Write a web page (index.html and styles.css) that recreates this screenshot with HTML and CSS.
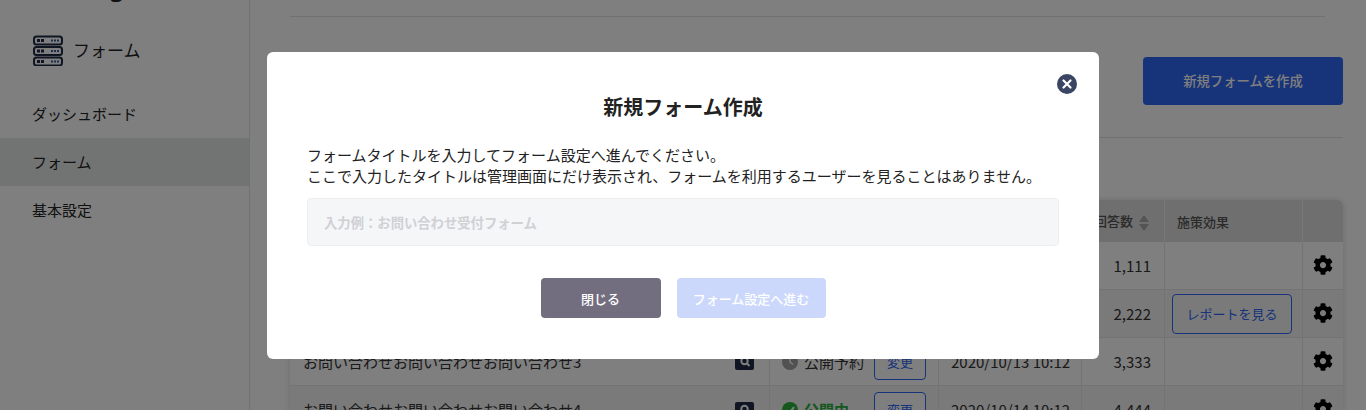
FILE: index.html
```html
<!DOCTYPE html>
<html lang="ja">
<head>
    <meta charset="UTF-8">
    <title>フォーム</title>
    <link rel="stylesheet" href="styles.css">
</head>
<body>

<div class="page">
    <aside class="sidebar">
        <div class="brand-tail">Forming</div>
        <div class="sidebar-title">
            <svg class="server-icon" width="32" height="32" viewBox="0 0 32 32">
                <g class="server-row">
                    <rect x="2" y="2.500" width="28" height="8" rx="2.500"/>
                    <rect x="2" y="13" width="28" height="8" rx="2.500"/>
                    <rect x="2" y="23.500" width="28" height="8" rx="2.500"/>
                </g>
                <g fill="#1f2a44">
                    <rect x="5" y="5" width="3" height="3"/><rect x="9" y="5" width="3" height="3"/>
                    <rect x="5" y="15.500" width="3" height="3"/><rect x="9" y="15.500" width="3" height="3"/>
                    <rect x="5" y="26" width="3" height="3"/><rect x="9" y="26" width="3" height="3"/>
                </g>
                <g fill="#3d56a8">
                    <rect x="19" y="5.500" width="2" height="2"/><rect x="22" y="5.500" width="2" height="2"/><rect x="25" y="5.500" width="2" height="2"/>
                    <rect x="19" y="16" width="2" height="2"/><rect x="22" y="16" width="2" height="2"/><rect x="25" y="16" width="2" height="2"/>
                    <rect x="19" y="26.500" width="2" height="2"/><rect x="22" y="26.500" width="2" height="2"/><rect x="25" y="26.500" width="2" height="2"/>
                </g>
            </svg>
            <span>フォーム</span>
        </div>
        <nav class="side-nav">
            <a class="side-link">ダッシュボード</a>
            <a class="side-link active">フォーム</a>
            <a class="side-link">基本設定</a>
        </nav>
    </aside>

    <main class="content">
        <div class="rule-top"></div>
        <div class="head-row">
            <h2 class="page-title">フォーム一覧</h2>
            <button class="btn-create">新規フォームを作成</button>
        </div>
        <div class="rule-mid"></div>

        <table class="form-table">
            <thead>
                <tr>
                    <th class="col-title">フォームタイトル</th>
                    <th class="col-status">ステータス</th>
                    <th class="col-date">公開日時</th>
                    <th class="col-count">回答数<span class="sort"><i class="up"></i><i class="down"></i></span></th>
                    <th class="col-effect">施策効果</th>
                    <th class="col-gear"></th>
                </tr>
            </thead>
            <tbody>
                <tr>
                    <td><div class="title-cell">お問い合わせお問い合わせお問い合わせ1<span class="search-badge"></span></div></td>
                    <td></td>
                    <td class="date">2020/10/11 10:12</td>
                    <td class="count">1,111</td>
                    <td></td>
                    <td class="gear"><svg width="20" height="20" viewBox="0 0 512 512"><use href="#cog"/></svg></td>
                </tr>
                <tr>
                    <td><div class="title-cell">お問い合わせお問い合わせお問い合わせ2<span class="search-badge"></span></div></td>
                    <td></td>
                    <td class="date">2020/10/12 10:12</td>
                    <td class="count">2,222</td>
                    <td><a class="btn-report">レポートを見る</a></td>
                    <td class="gear"><svg width="20" height="20" viewBox="0 0 512 512"><use href="#cog"/></svg></td>
                </tr>
                <tr>
                    <td>
                        <div class="title-cell">お問い合わせお問い合わせお問い合わせ3
                            <span class="search-badge">
                                <svg width="12" height="12" viewBox="0 0 12 12"><circle cx="5.500" cy="5" r="3.200" fill="none" stroke="#fff" stroke-width="2"/><path d="M8 7.500l2.500 2.500" stroke="#fff" stroke-width="2"/></svg>
                            </span>
                        </div>
                    </td>
                    <td>
                        <div class="status-cell">
                            <span class="status scheduled">
                                <svg width="16" height="16" viewBox="0 0 16 16"><circle cx="8" cy="8" r="8" fill="#a2a2a2"/><path d="M8 3.500V8l3 2.500" fill="none" stroke="#fff" stroke-width="1.500"/></svg>
                                公開予約
                            </span>
                            <a class="btn-change">変更</a>
                        </div>
                    </td>
                    <td class="date">2020/10/13 10:12</td>
                    <td class="count">3,333</td>
                    <td></td>
                    <td class="gear"><svg width="20" height="20" viewBox="0 0 512 512"><use href="#cog"/></svg></td>
                </tr>
                <tr>
                    <td>
                        <div class="title-cell">お問い合わせお問い合わせお問い合わせ4
                            <span class="search-badge">
                                <svg width="12" height="12" viewBox="0 0 12 12"><circle cx="5.500" cy="5" r="3.200" fill="none" stroke="#fff" stroke-width="2"/><path d="M8 7.500l2.500 2.500" stroke="#fff" stroke-width="2"/></svg>
                            </span>
                        </div>
                    </td>
                    <td>
                        <div class="status-cell">
                            <span class="status live">
                                <svg width="16" height="16" viewBox="0 0 16 16"><circle cx="8" cy="8" r="8" fill="#28b03c"/><path d="M4 8.200l3 3 5-6" fill="none" stroke="#fff" stroke-width="2"/></svg>
                                公開中
                            </span>
                            <a class="btn-change">変更</a>
                        </div>
                    </td>
                    <td class="date">2020/10/14 10:12</td>
                    <td class="count">4,444</td>
                    <td></td>
                    <td class="gear"><svg width="20" height="20" viewBox="0 0 512 512"><use href="#cog"/></svg></td>
                </tr>
            </tbody>
        </table>
    </main>
</div>

<svg class="defs" width="0" height="0">
    <symbol id="cog" viewBox="0 0 512 512">
        <path d="M487.400 315.700l-42.600-24.600c4.300-23.200 4.300-47 0-70.200l42.600-24.600c4.900-2.800 7.100-8.600 5.500-14-11.100-35.600-30-67.800-54.700-94.600-3.800-4.100-10-5.100-14.800-2.300L380.800 110c-17.900-15.400-38.500-27.300-60.800-35.100V25.800c0-5.600-3.900-10.500-9.400-11.700-36.700-8.200-74.300-7.800-109.200 0-5.500 1.200-9.400 6.100-9.400 11.700V75c-22.200 7.900-42.800 19.800-60.800 35.100L88.700 85.500c-4.900-2.800-11-1.900-14.800 2.300-24.700 26.700-43.600 58.900-54.700 94.600-1.700 5.400.6 11.200 5.500 14L67.300 221c-4.300 23.200-4.300 47 0 70.200l-42.600 24.600c-4.900 2.800-7.100 8.600-5.500 14 11.100 35.600 30 67.800 54.700 94.600 3.800 4.100 10 5.100 14.800 2.300l42.600-24.600c17.900 15.400 38.500 27.300 60.800 35.100v49.200c0 5.600 3.900 10.500 9.400 11.700 36.700 8.200 74.300 7.800 109.200 0 5.500-1.200 9.400-6.100 9.400-11.700v-49.200c22.200-7.900 42.800-19.800 60.800-35.100l42.600 24.600c4.900 2.800 11 1.900 14.800-2.300 24.700-26.700 43.600-58.900 54.700-94.600 1.500-5.500-.7-11.300-5.600-14.100zM256 336c-44.100 0-80-35.900-80-80s35.900-80 80-80 80 35.900 80 80-35.900 80-80 80z"/>
    </symbol>
</svg>

<div class="overlay"></div>

<div class="modal">
    <button class="modal-close" aria-label="閉じる">
        <svg width="20" height="20" viewBox="0 0 20 20"><circle cx="10" cy="10" r="10" fill="#3b4563"/><path d="M6.500 6.500l7 7M13.500 6.500l-7 7" stroke="#fff" stroke-width="2.200" stroke-linecap="round"/></svg>
    </button>
    <h3 class="modal-title">新規フォーム作成</h3>
    <p class="modal-text">フォームタイトルを入力してフォーム設定へ進んでください。<br>ここで入力したタイトルは管理画面にだけ表示され、フォームを利用するユーザーを見ることはありません。</p>
    <input class="modal-input" type="text" placeholder="入力例：お問い合わせ受付フォーム">
    <div class="modal-actions">
        <button class="btn-close">閉じる</button>
        <button class="btn-next">フォーム設定へ進む</button>
    </div>
</div>

</body>
</html>
```

FILE: styles.css
```css
* {
    box-sizing: border-box;
}
html, body {
    height: 410px;
    overflow: hidden;
}
body {
    margin: 0;
    background: #fff;
    color: #222;
    font-family: "Noto Sans CJK JP", "Noto Sans", sans-serif;
    font-size: 15px;
}
.page {
    display: flex;
    height: 410px;
    overflow: hidden;
}
.defs {
    position: absolute;
}

/* sidebar */
.sidebar {
    width: 250px;
    flex-shrink: 0;
    background: #fff;
    border-right: 1px solid #e2e2e2;
}
.brand-tail {
    height: 22px;
    margin-top: -24px;
    padding-left: 32px;
    font-size: 22px;
    font-weight: 700;
    line-height: 22px;
}
.sidebar-title {
    display: flex;
    align-items: center;
    gap: 9px;
    height: 34px;
    margin-top: 35px;
    padding-left: 32px;
    font-size: 17px;
}
.sidebar-title span {
    margin-bottom: 2px;
}
.server-row rect {
    fill: #fff;
    stroke: #1f2a44;
    stroke-width: 2;
}
.side-nav {
    margin-top: 23px;
}
.side-link {
    display: flex;
    align-items: center;
    height: 48px;
    padding: 0 0 2px 32px;
    font-size: 15px;
}
.side-link.active {
    background: #e5e9e6;
}

/* main */
.content {
    flex: 1;
    padding: 0 23px 0 40px;
}
.rule-top {
    height: 17px;
    margin-right: 18px;
    border-bottom: 1px solid #e2e2e2;
}
.head-row {
    display: flex;
    justify-content: space-between;
    align-items: center;
    height: 120px;
    padding-top: 8px;
}
.page-title {
    margin: 0;
    font-size: 20px;
}
.btn-create {
    width: 200px;
    height: 48px;
    padding-bottom: 3px;
    border: none;
    border-radius: 4px;
    background: #2e66f4;
    color: #fff;
    font-family: inherit;
    font-size: 13.33px;
    font-weight: 500;
}
.rule-mid {
    border-bottom: 1px solid #e2e2e2;
}

/* table */
.form-table {
    width: 1053px;
    margin-top: 62px;
    border-collapse: separate;
    border-spacing: 0;
    table-layout: fixed;
    border-radius: 6px;
    box-shadow: 0 0 6px rgba(0, 0, 0, 0.15);
}
.form-table th {
    height: 42px;
    padding: 0 13px 0 12px;
    background: #dedede;
    border-right: 1px solid #f0f0f0;
    color: #555;
    font-size: 13px;
    font-weight: 500;
    text-align: left;
}
.form-table th:first-child {
    border-top-left-radius: 6px;
}
.form-table th:last-child {
    border-top-right-radius: 6px;
    border-right: none;
}
.form-table td {
    height: 48px;
    padding: 0 13px;
    background: #fff;
    border-right: 1px solid #e6e6e6;
    border-bottom: 1px solid #e6e6e6;
    font-size: 15px;
}
.form-table td:last-child {
    border-right: none;
}
.form-table tbody tr:nth-child(even) td {
    background: #f5f5f5;
}
.col-title { width: 480px; }
.col-status { width: 169px; }
.col-date { width: 143px; }
.col-count { width: 83px; }
.col-effect { width: 138px; }
.col-gear { width: 40px; }
.sort {
    display: inline-flex;
    flex-direction: column;
    gap: 2px;
    margin-left: 6px;
    vertical-align: middle;
}
.sort i {
    width: 0;
    height: 0;
    border-left: 5px solid transparent;
    border-right: 5px solid transparent;
}
.sort .up { border-bottom: 7px solid #a8a8a8; }
.sort .down { border-top: 7px solid #a8a8a8; }
.title-cell {
    display: flex;
    justify-content: space-between;
    align-items: center;
    color: #333;
}
.search-badge {
    display: flex;
    align-items: center;
    justify-content: center;
    width: 19px;
    height: 16px;
    margin-right: 2px;
    border-radius: 2px;
    background: #1f2a44;
}
.status-cell {
    display: flex;
    justify-content: space-between;
    align-items: center;
}
.status {
    display: flex;
    align-items: center;
    gap: 6px;
    margin-left: -1px;
}
.status.scheduled { color: #333; }
.status.live { color: #28b03c; font-weight: 700; }
.btn-change {
    display: flex;
    align-items: center;
    justify-content: center;
    width: 52px;
    height: 36px;
    margin-right: -1px;
    border: 1px solid #2e66f4;
    border-radius: 4px;
    background: #fff;
    color: #2e66f4;
    font-size: 13px;
}
.form-table .date {
    padding-left: 12px;
    white-space: nowrap;
    color: #333;
}
.count {
    text-align: right;
    color: #333;
}
.btn-report {
    display: flex;
    align-items: center;
    justify-content: center;
    width: 120px;
    height: 40px;
    margin-left: -6px;
    border: 1px solid #2e66f4;
    border-radius: 4px;
    color: #2e66f4;
    font-size: 13px;
}
.form-table .gear {
    padding: 0 1px 2px 0;
    text-align: center;
    color: #000;
}
.gear svg {
    display: block;
    margin: 0 auto;
}

/* modal */
.overlay {
    position: fixed;
    inset: 0;
    background: rgba(0, 0, 0, 0.5);
}
.modal {
    position: fixed;
    left: 267px;
    top: 52px;
    width: 832px;
    height: 307px;
    padding: 0 40px;
    background: #fff;
    border-radius: 6px;
}
.modal-close {
    position: absolute;
    top: 22px;
    right: 22px;
    width: 20px;
    height: 20px;
    padding: 0;
    border: none;
    background: none;
}
.modal-close svg {
    display: block;
}
.modal-title {
    margin: 41px 0 0;
    font-size: 20px;
    font-weight: 700;
    line-height: 28px;
    text-align: center;
    color: #222;
}
.modal-text {
    margin: 23px 0 0;
    font-size: 15px;
    line-height: 21px;
    color: #222;
}
.modal-input {
    display: block;
    width: 752px;
    height: 48px;
    margin-top: 12px;
    padding: 0 16px;
    border: 1px solid #eceef0;
    border-radius: 4px;
    background: #f5f6f8;
    font-family: inherit;
    font-size: 13.33px;
    font-weight: 700;
}
.modal-input::placeholder {
    color: #cfd1d4;
}
.modal-actions {
    display: flex;
    justify-content: center;
    gap: 16px;
    margin-top: 32px;
}
.modal-actions button {
    height: 40px;
    border: none;
    border-radius: 4px;
    color: #fff;
    font-family: inherit;
    font-size: 13px;
    font-weight: 500;
}
.btn-close {
    width: 120px;
    background: #726e80;
}
.btn-next {
    width: 149px;
    background: #cbd8fb;
}
```
